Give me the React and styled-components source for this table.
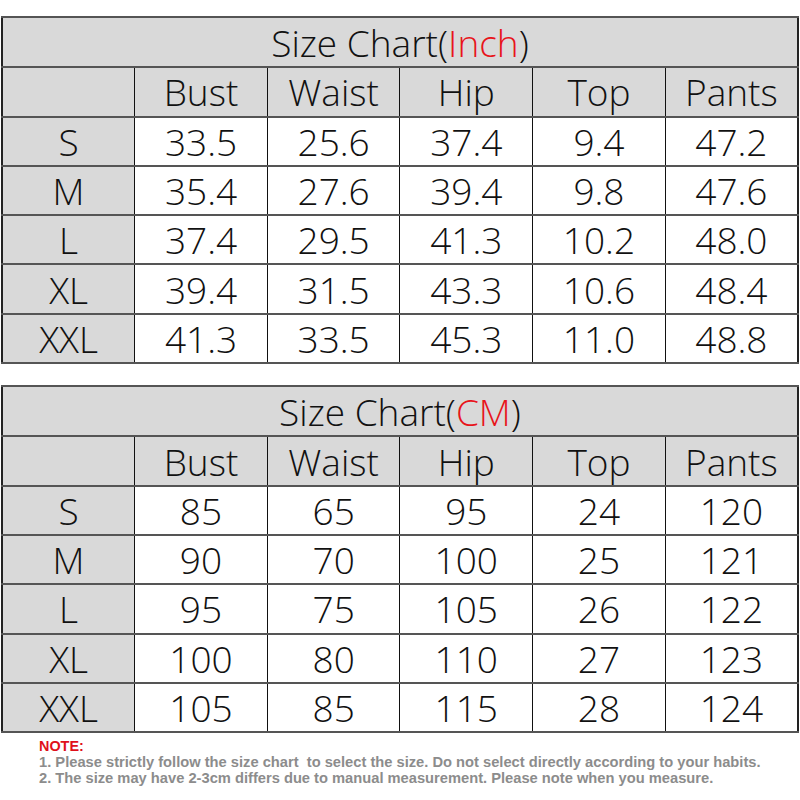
import React from "react";
import styled, { createGlobalStyle } from "styled-components";

const Global = createGlobalStyle`
  html, body { margin: 0; padding: 0; background: #fff; }
  body { width: 800px; height: 800px; overflow: hidden; }
`;

const Page = styled.div`
  width: 800px;
  padding: 16px 1px 0 1px;
  box-sizing: border-box;
  display: flex;
  flex-direction: column;
  gap: 21px;
  font-family: "Open Sans", "Noto Sans", sans-serif;
`;

const Table = styled.table`
  width: 798px;
  border-collapse: collapse;
  table-layout: fixed;
  border: 2px solid #222;
`;

const Cell = styled.td`
  height: 47.3px;
  padding: 0;
  border-left: 1.5px solid #111;
  border-right: 1.5px solid #111;
  border-top: 2px solid #555;
  border-bottom: 2px solid #555;
  text-align: center;
  vertical-align: middle;
  font-size: 37px;
  font-weight: 300;
  color: #111;
  line-height: 1;
  background: ${(p) => (p.$shade ? "#d9d9d9" : "#fff")};
`;

const TitleCell = styled(Cell)`
  background: #d9d9d9;
  font-size: 37px;
  padding-top: 1px;
`;

const Red = styled.span`
  color: #e8141b;
`;

const Notes = styled.div`
  margin-top: -15px;
  padding-left: 38px;
  font-family: "Liberation Sans", Arial, sans-serif;
  font-size: 14.7px;
  font-weight: 700;
  line-height: 15.3px;
  color: #8c8c8c;
`;

const NoteTitle = styled.div`
  color: #e0101a;
  font-size: 14.4px;
  margin-bottom: 1px;
`;

const headers = ["Bust", "Waist", "Hip", "Top", "Pants"];
const sizes = ["S", "M", "L", "XL", "XXL"];
const inch = [
  ["33.5", "25.6", "37.4", "9.4", "47.2"],
  ["35.4", "27.6", "39.4", "9.8", "47.6"],
  ["37.4", "29.5", "41.3", "10.2", "48.0"],
  ["39.4", "31.5", "43.3", "10.6", "48.4"],
  ["41.3", "33.5", "45.3", "11.0", "48.8"],
];
const cm = [
  ["85", "65", "95", "24", "120"],
  ["90", "70", "100", "25", "121"],
  ["95", "75", "105", "26", "122"],
  ["100", "80", "110", "27", "123"],
  ["105", "85", "115", "28", "124"],
];

function Chart({ unit, data }) {
  return (
    <Table>
      <tbody>
        <tr>
          <TitleCell colSpan={6}>
            Size Chart(<Red>{unit}</Red>)
          </TitleCell>
        </tr>
        <tr>
          <Cell $shade />
          {headers.map((h) => (
            <Cell key={h} $shade>{h}</Cell>
          ))}
        </tr>
        {data.map((row, i) => (
          <tr key={sizes[i]}>
            <Cell $shade>{sizes[i]}</Cell>
            {row.map((v, j) => (
              <Cell key={j}>{v}</Cell>
            ))}
          </tr>
        ))}
      </tbody>
    </Table>
  );
}

export default function App() {
  return (
    <>
      <Global />
      <Page>
        <Chart unit="Inch" data={inch} />
        <Chart unit="CM" data={cm} />
        <Notes>
          <NoteTitle>NOTE:</NoteTitle>
          <div>1. Please strictly follow the size chart&nbsp; to select the size. Do not select directly according to your habits.</div>
          <div>2. The size may have 2-3cm differs due to manual measurement. Please note when you measure.</div>
        </Notes>
      </Page>
    </>
  );
}
